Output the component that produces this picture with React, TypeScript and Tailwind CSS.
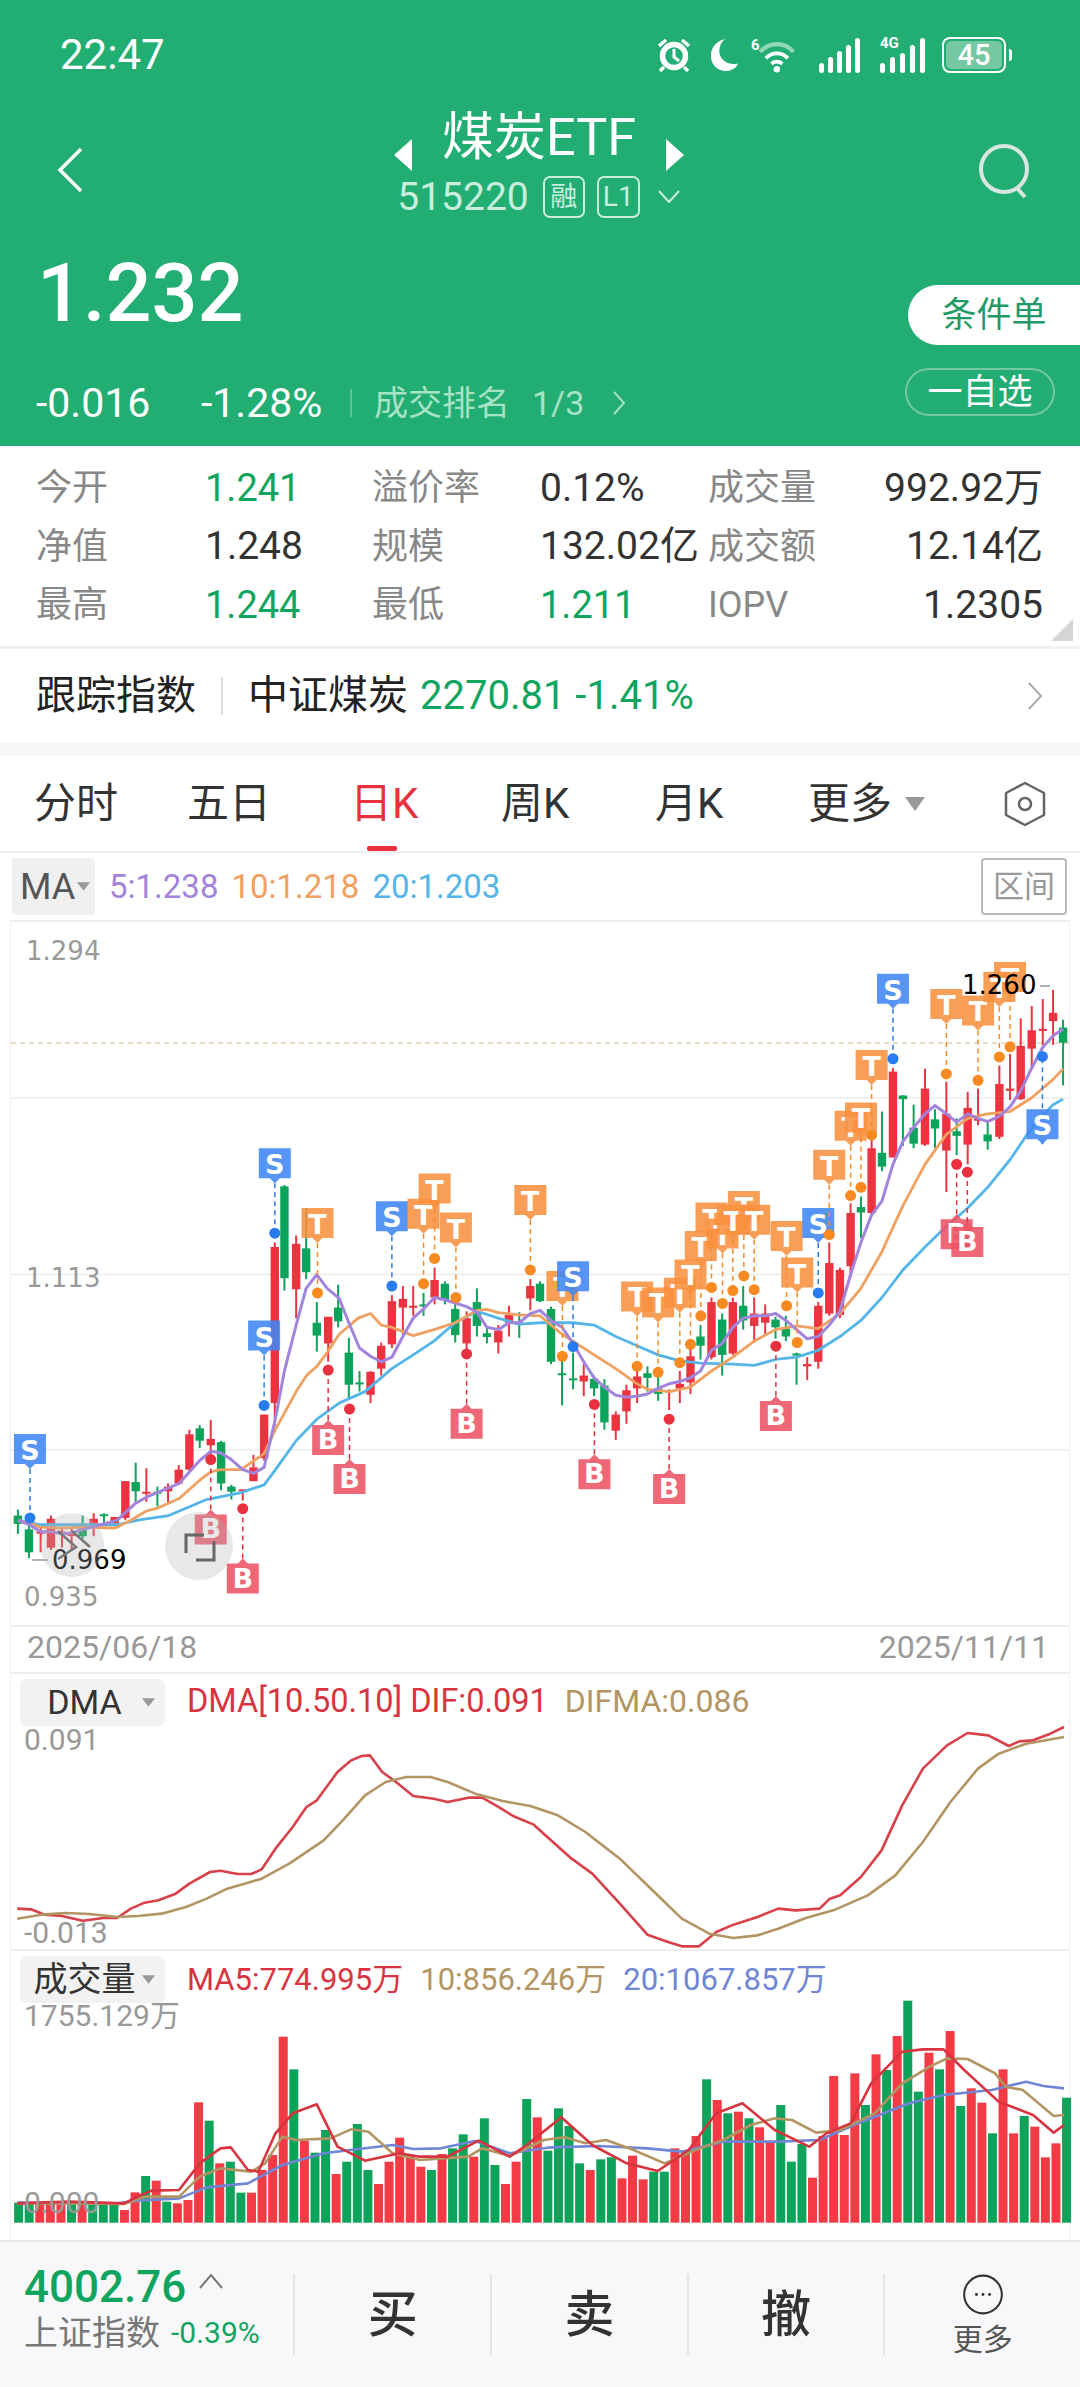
// Coal ETF quote screen — daily K chart with DMA and volume panels
type Candle = [string, number, number, number, number, number]
type Marker = [string, number, number, number]
type Pt = [number, number]

const CJK_NUM = "font-['Roboto','Noto_Sans_CJK_SC',sans-serif]"

// chart data is read off the reference crops, then scaled back to page pixels
const kx = (x: number) => x / 2.904
const ky = (y: number) => 920 + y / 2.178
const rx = (x: number) => 540 + x / 2.904

const LEFT_CANDLES: Candle[] = [
  ['g', 52, 1282, 1335, 1295, 1313], ['g', 84, 1290, 1388, 1325, 1375], ['r', 118, 1320, 1375, 1330, 1332],
  ['r', 148, 1295, 1370, 1302, 1365], ['r', 180, 1320, 1365, 1330, 1332], ['r', 208, 1320, 1370, 1335, 1338],
  ['g', 240, 1295, 1345, 1315, 1340], ['r', 272, 1290, 1340, 1302, 1320], ['g', 302, 1290, 1312, 1292, 1295],
  ['r', 333, 1298, 1315, 1298, 1312], ['r', 364, 1220, 1305, 1220, 1300], ['g', 394, 1180, 1265, 1222, 1242],
  ['r', 425, 1192, 1265, 1243, 1246], ['g', 457, 1232, 1275, 1243, 1246], ['r', 488, 1225, 1268, 1232, 1242],
  ['r', 519, 1185, 1228, 1195, 1225], ['r', 550, 1108, 1198, 1118, 1195], ['g', 580, 1098, 1148, 1105, 1132],
  ['r', 612, 1087, 1175, 1128, 1142], ['g', 642, 1132, 1240, 1135, 1225], ['g', 672, 1228, 1260, 1232, 1243],
  ['r', 705, 1238, 1262, 1238, 1241], ['r', 736, 1163, 1220, 1190, 1220], ['r', 767, 1075, 1175, 1075, 1170],
  ['r', 798, 700, 1100, 710, 1050], ['g', 826, 575, 805, 578, 778], ['r', 860, 685, 865, 703, 802],
  ['g', 889, 625, 780, 713, 765], ['g', 920, 830, 938, 875, 903], ['r', 953, 862, 960, 862, 920],
  ['g', 982, 792, 885, 842, 872], ['g', 1013, 908, 1040, 940, 1010], ['g', 1044, 980, 1025, 1005, 1008],
  ['r', 1076, 980, 1050, 982, 1032], ['r', 1107, 918, 990, 925, 975], ['r', 1138, 815, 930, 828, 922],
  ['r', 1170, 795, 900, 823, 842], ['r', 1200, 795, 860, 838, 841], ['g', 1230, 810, 860, 835, 838],
  ['r', 1262, 755, 835, 782, 820], ['g', 1292, 785, 835, 790, 825], ['g', 1322, 822, 918, 845, 902],
  ['r', 1355, 850, 950, 865, 920], ['g', 1385, 800, 905, 830, 882], ['g', 1414, 885, 920, 898, 906],
  ['r', 1447, 880, 942, 892, 918], ['r', 1478, 838, 905, 858, 875], ['g', 1508, 852, 908, 875, 878],
  ['r', 1540, 780, 848, 795, 822],
]

const RIGHT_CANDLES: Candle[] = [
  ['g', 0, 785, 830, 790, 828], ['g', 32, 840, 965, 845, 960], ['g', 64, 950, 1055, 985, 988],
  ['g', 96, 940, 1020, 996, 998], ['r', 127, 965, 1035, 990, 1003], ['g', 157, 990, 1035, 997, 1018],
  ['g', 187, 998, 1108, 1012, 1092], ['r', 220, 1068, 1130, 1075, 1110], ['r', 251, 1010, 1095, 1022, 1068],
  ['r', 282, 965, 1050, 992, 1018], ['g', 312, 970, 1025, 985, 995], ['g', 343, 985, 1045, 1018, 1030],
  ['r', 375, 1020, 1065, 1022, 1026], ['r', 406, 980, 1050, 1008, 1018], ['r', 437, 920, 1030, 948, 1005],
  ['g', 466, 880, 955, 905, 925], ['r', 498, 820, 955, 830, 950], ['g', 529, 855, 990, 868, 945],
  ['r', 560, 820, 945, 830, 942], ['g', 590, 795, 890, 838, 870], ['r', 622, 820, 918, 855, 882],
  ['r', 654, 835, 900, 855, 875], ['g', 684, 862, 910, 868, 885], ['g', 714, 860, 915, 888, 905],
  ['g', 745, 940, 1010, 942, 945], ['r', 776, 950, 1000, 965, 970], ['r', 808, 830, 975, 838, 960],
  ['r', 840, 700, 860, 745, 855], ['r', 871, 755, 865, 760, 858], ['r', 902, 615, 775, 636, 752],
  ['g', 932, 600, 690, 623, 635], ['r', 963, 470, 640, 495, 636], ['g', 993, 415, 545, 505, 535],
  ['r', 1025, 320, 515, 328, 515], ['g', 1054, 380, 490, 380, 388], ['g', 1085, 400, 495, 450, 485],
  ['r', 1118, 322, 490, 365, 487], ['g', 1147, 410, 495, 432, 452], ['r', 1180, 350, 590, 420, 500],
  ['g', 1210, 430, 510, 458, 468], ['r', 1242, 372, 530, 407, 487], ['r', 1272, 365, 445, 430, 435],
  ['g', 1300, 438, 498, 465, 480], ['r', 1334, 315, 475, 355, 470], ['r', 1365, 290, 390, 365, 370],
  ['r', 1396, 212, 390, 272, 388], ['r', 1428, 185, 320, 238, 278], ['r', 1460, 170, 270, 235, 238],
  ['r', 1490, 150, 270, 200, 218], ['g', 1519, 215, 358, 232, 265],
]

const LEFT_MARKERS: Marker[] = [
  ['S', 87, 1152, 1300], ['S', 798, 530, 680], ['S', 767, 905, 1055], ['T', 922, 660, 810], ['S', 1138, 645, 795],
  ['T', 1230, 640, 790], ['T', 1262, 585, 735], ['T', 1324, 670, 820], ['T', 1540, 610, 760], ['B', 612, 1323, 1173],
  ['B', 705, 1430, 1280], ['B', 953, 1128, 978], ['B', 1015, 1213, 1063], ['B', 1355, 1093, 943],
]

const RIGHT_MARKERS: Marker[] = [
  ['T', 65, 797, 948], ['S', 96, 776, 927], ['T', 282, 820, 970], ['T', 343, 833, 983], ['T', 406, 812, 962],
  ['T', 498, 648, 798], ['T', 467, 710, 860], ['T', 437, 772, 922], ['T', 530, 683, 833], ['T', 592, 623, 773],
  ['T', 560, 653, 805], ['T', 622, 653, 803], ['T', 716, 688, 838], ['T', 747, 768, 918], ['S', 808, 660, 810],
  ['T', 840, 533, 683], ['T', 902, 448, 598], ['T', 932, 430, 580], ['T', 963, 316, 466], ['S', 1025, 150, 300],
  ['T', 1180, 183, 333], ['T', 1272, 197, 347], ['T', 1365, 124, 274], ['T', 1334, 146, 296], ['S', 1459, 445, 295],
  ['B', 158, 1203, 1053], ['B', 375, 1235, 1085], ['B', 685, 1076, 926], ['B', 1210, 680, 530], ['B', 1241, 697, 547],
]

const MA5_L: Pt[] = [[52,1305],[85,1315],[118,1330],[150,1330],[180,1335],[210,1333],[240,1325],[270,1320],[340,1305],[394,1268],[425,1255],[488,1235],[520,1225],[580,1175],[612,1155],[640,1158],[670,1172],[705,1195],[736,1203],[767,1190],[798,1090],[826,980],[860,880],[889,800],[920,770],[950,800],[985,822],[1013,875],[1044,930],[1076,948],[1107,960],[1138,950],[1170,905],[1200,865],[1230,845],[1262,820],[1292,825],[1322,832],[1355,840],[1385,852],[1414,885],[1447,890],[1478,875],[1508,875],[1540,855]]
const MA5_R: Pt[] = [[0,848],[32,870],[64,885],[96,920],[127,960],[157,995],[187,1015],[220,1033],[251,1037],[282,1035],[312,1030],[343,1018],[375,1008],[406,1003],[437,995],[466,980],[498,935],[529,920],[560,885],[590,865],[622,860],[654,860],[684,855],[714,870],[745,890],[776,910],[808,905],[840,880],[871,850],[902,770],[932,700],[963,640],[993,610],[1025,530],[1054,480],[1085,450],[1118,420],[1147,402],[1180,420],[1210,438],[1242,420],[1272,430],[1300,437],[1334,425],[1365,405],[1396,370],[1428,320],[1460,275],[1490,250],[1519,235]]
const MA10_L: Pt[] = [[52,1305],[118,1320],[180,1322],[240,1320],[335,1322],[380,1305],[425,1285],[460,1278],[520,1258],[580,1218],[612,1200],[640,1195],[700,1195],[767,1160],[798,1110],[860,1025],[890,990],[920,970],[950,940],[985,900],[1040,865],[1076,855],[1107,880],[1138,885],[1200,903],[1260,890],[1322,875],[1385,848],[1414,846],[1447,853],[1508,858]]
const MA10_R: Pt[] = [[0,860],[32,880],[64,900],[96,915],[157,945],[220,975],[282,1008],[312,1020],[375,1025],[437,1015],[498,980],[560,950],[622,915],[684,890],[745,882],[808,888],[871,855],[932,800],[993,720],[1054,620],[1118,530],[1180,465],[1242,430],[1300,420],[1365,415],[1428,385],[1490,345],[1519,322]]
const MA20_L: Pt[] = [[52,1305],[118,1315],[210,1315],[340,1315],[400,1305],[490,1295],[600,1260],[700,1245],[767,1228],[800,1195],[860,1132],[920,1085],[985,1050],[1060,1025],[1138,975],[1200,945],[1260,915],[1322,875],[1385,850],[1447,865],[1508,878]]
const MA20_R: Pt[] = [[0,875],[96,875],[157,880],[220,905],[282,925],[343,945],[406,958],[466,963],[560,965],[622,968],[684,955],[745,950],[808,935],[871,905],[932,870],[993,820],[1054,760],[1118,710],[1180,665],[1242,625],[1300,580],[1365,520],[1428,450],[1490,400],[1519,388]]

const DIF: Pt[] = [[25,830],[45,832],[65,848],[90,852],[120,866],[150,858],[170,858],[190,830],[210,812],[230,805],[255,785],[275,755],[305,720],[320,716],[345,726],[365,726],[380,712],[400,650],[425,585],[445,525],[460,505],[490,420],[510,385],[525,372],[537,370],[555,420],[575,450],[600,492],[630,500],[650,510],[680,497],[700,497],[720,520],[745,552],[775,578],[800,625],[830,680],[860,725],[900,815],[940,908],[970,930],[990,943],[1015,943],[1040,900],[1065,878],[1100,855],[1130,830],[1155,835],[1190,830],[1205,800],[1220,790],[1250,735],[1280,655],[1310,520],[1340,410],[1375,340],[1405,303],[1435,310],[1465,342],[1480,328],[1500,325],[1525,305],[1545,285]]
const DIFMA: Pt[] = [[25,860],[60,848],[95,843],[130,846],[170,855],[200,852],[235,845],[270,825],[300,800],[330,770],[380,740],[420,695],[470,625],[500,560],[530,490],[560,450],[590,435],[625,435],[650,450],[690,485],[730,507],[770,522],[810,550],[850,600],[900,680],[950,780],[990,860],[1030,905],[1065,918],[1100,910],[1130,890],[1170,858],[1210,835],[1260,790],[1300,730],[1340,630],[1380,510],[1420,410],[1450,365],[1490,335],[1545,315]]

const VOL_BARS: [string, number][] = ([
  'g758','g760','r760','r760','r760','g760','r760','g760','g760','g760','r780','r727','g678','r692','g755','r760','r750','r457','g512','r640',
  'g635','g728','r728','r660','r615','r260','g358','r572','g608','g540','r672','g635','g522','g660','r702','r635','r563','r615','r650','g660',
  'r612','g595','g553','r620','g505','g645','r702','r635','g447','r502','g602','g475','g528','g640','r660','g628','g622','r685','r617','r688',
  'g665','g665','r595','r600','r558','g388','r450','g490','r485','g505','r532','r575','g465','g635','g582','r683','r558','r378','r555','r370',
  'g465','r313','g360','r258','g152','g425','r308','g358','r243','g468','r415','r458','g550','r358','r550','g498','r530','r622','r580','g443',
] as string[]).map((s) => [s[0], Number(s.slice(1))])
const VOL_MA5: Pt[] = [[25,760],[100,755],[180,760],[205,735],[220,722],[260,720],[290,640],[320,595],[335,592],[360,660],[375,665],[400,550],[425,490],[460,463],[490,590],[530,632],[580,610],[610,620],[650,620],[695,572],[740,620],[765,585],[815,502],[860,585],[910,640],[955,663],[1000,600],[1040,490],[1078,460],[1125,540],[1175,590],[1200,550],[1235,520],[1265,400],[1310,305],[1340,298],[1370,298],[1400,360],[1450,455],[1500,495],[1530,548],[1545,525]]
const VOL_MA10: Pt[] = [[25,760],[100,760],[180,762],[210,740],[260,740],[290,680],[320,655],[365,665],[385,640],[410,560],[430,570],[480,565],[510,538],[535,545],[570,610],[610,630],[680,620],[700,595],[740,618],[790,570],[820,562],[850,580],[880,570],[920,600],[965,640],[1010,600],[1050,570],[1090,525],[1125,505],[1150,510],[1185,548],[1220,540],[1270,490],[1310,400],[1350,350],[1375,325],[1405,327],[1445,370],[1460,410],[1485,420],[1530,498],[1545,495]]
const VOL_MA20: Pt[] = [[25,758],[170,760],[200,752],[260,745],[300,712],[360,700],[410,645],[470,610],[530,595],[570,585],[600,597],[640,595],[690,573],[740,610],[800,592],[870,588],[940,595],[990,605],[1050,575],[1130,575],[1190,570],[1240,525],[1320,460],[1370,435],[1440,420],[1490,395],[1515,408],[1545,415]]

const toK = (l: Pt[], r: Pt[]) =>
  [...l.map(([x, y]) => `${kx(x)},${ky(y)}`), ...r.map(([x, y]) => `${rx(x)},${ky(y)}`)].join(' ')
const toDma = (p: Pt[]) => p.map(([x, y]) => `${x / 1.452},${1630 + y / 3}`).join(' ')
const toVol = (p: Pt[]) => p.map(([x, y]) => `${x / 1.452},${1950 + y / 3}`).join(' ')

const MARKER_STYLE: Record<string, { tag: string; dot: string }> = {
  T: { tag: '#f8913f', dot: '#f78a20' },
  S: { tag: '#3f86f4', dot: '#2a7bf0' },
  B: { tag: '#ec5364', dot: '#e8303f' },
}

function CandleMark({ c, mapX }: { c: Candle; mapX: (x: number) => number }) {
  const [color, x, hi, lo, top, bot] = c
  const fill = color === 'r' ? '#ee3340' : '#0ea35a'
  const cx = mapX(x)
  return (
    <g fill={fill}>
      <rect x={cx - 1} y={ky(hi)} width={2} height={ky(lo) - ky(hi)} />
      <rect x={cx - 4.2} y={ky(top)} width={8.4} height={Math.max(2, ky(bot) - ky(top))} />
    </g>
  )
}

function TradeMark({ m, mapX }: { m: Marker; mapX: (x: number) => number }) {
  const [type, x, tagY, dotY] = m
  const style = MARKER_STYLE[type]
  const cx = mapX(x)
  const cy = ky(tagY)
  const dy = ky(dotY)
  const up = type === 'B'
  const path = up
    ? `M${cx - 16} ${cy - 14}H${cx - 5}L${cx} ${cy - 19}L${cx + 5} ${cy - 14}H${cx + 16}V${cy + 16}H${cx - 16}Z`
    : `M${cx - 16} ${cy - 16}H${cx + 16}V${cy + 14}H${cx + 5}L${cx} ${cy + 19}L${cx - 5} ${cy + 14}H${cx - 16}Z`
  return (
    <g>
      <line x1={cx} y1={up ? cy - 19 : cy + 19} x2={cx} y2={dy} stroke={style.dot} strokeWidth={1.5} strokeDasharray="5 4" />
      <ellipse cx={cx} cy={dy} rx={5.5} ry={5.5} fill={style.dot} />
      <path d={path} fill={style.tag} fillOpacity={0.88} />
      <text x={cx} y={cy + 10} textAnchor="middle" fill="#fff" fontSize={27} fontWeight={700} className="font-['DejaVu_Sans',sans-serif]">
        {type}
      </text>
    </g>
  )
}

function KChart() {
  return (
    <svg viewBox="11 921 1058 703" className="block w-[1058px] h-[703px]">
      {[1097, 1273.5, 1449].map((y) => (
        <line key={y} x1={11} x2={1069} y1={y} y2={y} stroke="#ececec" strokeWidth={1.5} />
      ))}
      <line x1={11} x2={1069} y1={1042} y2={1042} stroke="#d9b88a" strokeWidth={1.2} strokeDasharray="5 4" />
      <g fill="#999" fontSize={26} className="font-['DejaVu_Sans',sans-serif]">
        <text x={26} y={959}>1.294</text>
        <text x={26} y={1286}>1.113</text>
        <text x={24} y={1605}>0.935</text>
      </g>
      {LEFT_CANDLES.map((c) => <CandleMark key={c[1]} c={c} mapX={kx} />)}
      {RIGHT_CANDLES.map((c) => <CandleMark key={c[1]} c={c} mapX={rx} />)}
      <polyline points={toK(MA20_L, MA20_R)} fill="none" stroke="#53b5e8" strokeWidth={2.8} strokeLinejoin="round" />
      <polyline points={toK(MA10_L, MA10_R)} fill="none" stroke="#f0a060" strokeWidth={2.8} strokeLinejoin="round" />
      <polyline points={toK(MA5_L, MA5_R)} fill="none" stroke="#a284dc" strokeWidth={3} strokeLinejoin="round" />
      {LEFT_MARKERS.map((m) => <TradeMark key={`${m[0]}${m[1]}`} m={m} mapX={kx} />)}
      {RIGHT_MARKERS.map((m) => <TradeMark key={`${m[0]}${m[1]}`} m={m} mapX={rx} />)}
      <text x={962} y={993} fill="#000" fontSize={26} className="font-['DejaVu_Sans',sans-serif]">1.260</text>
      <line x1={1040} x2={1050} y1={985} y2={985} stroke="#999" strokeWidth={1.5} />
      <line x1={32} x2={48} y1={1559} y2={1559} stroke="#999" strokeWidth={1.5} />
      <text x={52} y={1568} fill="#000" fontSize={26} className="font-['DejaVu_Sans',sans-serif]">0.969</text>
      {/* floating screenshot helpers */}
      <circle cx={72} cy={1544} r={32} fill="#b4b4b4" fillOpacity={0.3} />
      <path d="M58 1530L76 1546L58 1558M72 1530L90 1546" fill="none" stroke="#777" strokeWidth={2.5} />
      <circle cx={199} cy={1545} r={34} fill="#b4b4b4" fillOpacity={0.3} />
      <path d="M186 1552V1534H204M214 1540V1559H196" fill="none" stroke="#666" strokeWidth={3} />
    </svg>
  )
}

function DmaChart() {
  return (
    <svg viewBox="11 1730 1058 217" className="block w-[1058px] h-[217px] overflow-visible">
      <g fill="#999" fontSize={30}>
        <text x={24} y={1748}>0.091</text>
        <text x={24} y={1941}>-0.013</text>
      </g>
      <polyline points={toDma(DIF)} fill="none" stroke="#d8404a" strokeWidth={2.6} strokeLinejoin="round" />
      <polyline points={toDma(DIFMA)} fill="none" stroke="#b39563" strokeWidth={2.6} strokeLinejoin="round" />
    </svg>
  )
}

function VolumeChart() {
  return (
    <svg viewBox="11 2003 1058 237" className="block w-[1058px] h-[237px] overflow-visible">
      {VOL_BARS.map(([color, top], i) => {
        const x = (27 + 15.37 * i) / 1.452
        const y = 1950 + top / 3
        return <rect key={i} x={x - 4.5} y={y} width={9} height={2222.7 - y} fill={color === 'r' ? '#f23b45' : '#0ea35a'} />
      })}
      <polyline points={toVol(VOL_MA20)} fill="none" stroke="#6f86d6" strokeWidth={2.6} strokeLinejoin="round" />
      <polyline points={toVol(VOL_MA10)} fill="none" stroke="#b39563" strokeWidth={2.6} strokeLinejoin="round" />
      <polyline points={toVol(VOL_MA5)} fill="none" stroke="#d8343f" strokeWidth={2.6} strokeLinejoin="round" />
      <g fill="#999" fontSize={30}>
        <text x={24} y={2026}>1755.129万</text>
        <text x={24} y={2213}>0.000</text>
      </g>
    </svg>
  )
}

function StatusIcons() {
  return (
    <div className="flex items-center text-white">
      <svg viewBox="0 0 36 36" className="w-[36px] h-[36px] mr-[17px]" fill="none" stroke="#fff">
        <circle cx="18" cy="19" r="11.5" strokeWidth="5.5" />
        <path d="M18 12v8l5 4" strokeWidth="3" />
        <path d="M3 9l7-6M33 9l-7-6M8 30l-4 4M28 30l4 4" strokeWidth="3.5" />
      </svg>
      <svg viewBox="0 0 32 36" className="w-[30px] h-[36px] mr-[12px]" fill="#fff">
        <path d="M17 1C8 3 2 10 2 19c0 9 7 16 16 16 6 0 11-3 13-8-10 3-20-4-20-13 0-5 2-10 6-13z" />
      </svg>
      <svg viewBox="0 0 52 40" className="w-[48px] h-[37px] mr-[20px]" fill="none" stroke="#fff">
        <text x="0" y="14" fill="#fff" stroke="none" fontSize="16" fontWeight="700">6</text>
        <path d="M10 16C20 5 36 5 46 16" strokeWidth="4.5" opacity="0.5" />
        <path d="M16 23c7-7 17-7 24 0" strokeWidth="4" />
        <path d="M22 29c4-3 8-3 12 0" strokeWidth="4" />
        <circle cx="28" cy="35" r="3.5" fill="#fff" stroke="none" />
      </svg>
      <div className="flex items-end gap-[4px] h-[35px] mr-[20px]">
        <span className="w-[5px] h-[10px] bg-white rounded-full" />
        <span className="w-[5px] h-[16px] bg-white rounded-full" />
        <span className="w-[5px] h-[22px] bg-white rounded-full" />
        <span className="w-[5px] h-[28px] bg-white rounded-full" />
        <span className="w-[5px] h-[35px] bg-white rounded-full" />
      </div>
      <div className="relative flex items-end gap-[5px] h-[35px] mr-[17px]">
        <span className="absolute left-0 -top-[2px] text-[15px] leading-none font-bold">4G</span>
        <span className="w-[5px] h-[10px] bg-white rounded-full" />
        <span className="w-[5px] h-[16px] bg-white rounded-full" />
        <span className="w-[5px] h-[20px] bg-white rounded-full" />
        <span className="w-[5px] h-[28px] bg-white rounded-full" />
        <span className="w-[5px] h-[35px] bg-white rounded-full" />
      </div>
      <div className="w-[64px] h-[36px] rounded-[8px] border-2 border-white flex items-center p-[2px]">
        <div className="w-full h-full rounded-[5px] bg-[#74c9a2] flex items-center justify-center text-[29px] font-medium leading-none">
          45
        </div>
      </div>
      <span className="w-[3px] h-[12px] ml-[3px] bg-white rounded-r" />
    </div>
  )
}

function Header() {
  return (
    <div className="h-[446px] bg-[#22ad72] text-white shrink-0">
      <div className="h-[110px] flex items-center justify-between pl-[60px] pr-[68px]">
        <span className="text-[42px] leading-none">22:47</span>
        <StatusIcons />
      </div>
      <div className="h-[122px] flex justify-between pl-[56px] pr-[48px]">
        <svg viewBox="0 0 28 46" className="w-[28px] h-[46px] mt-[37px]" fill="none" stroke="#fff" strokeWidth="3.5">
          <path d="M25 2L4 23l21 21" />
        </svg>
        <div className="flex flex-col items-center ml-[16px]">
          <div className="flex items-center gap-[30px] h-[56px]">
            <svg viewBox="0 0 18 32" className="w-[18px] h-[32px] mt-[34px]" fill="#fff"><path d="M18 0L0 16l18 16z" /></svg>
            <span className="text-[52px] leading-none">煤炭ETF</span>
            <svg viewBox="0 0 18 32" className="w-[18px] h-[32px] mt-[34px]" fill="#fff"><path d="M0 0l18 16L0 32z" /></svg>
          </div>
          <div className="flex items-center mt-[9px] h-[44px] text-[#c9eedd]">
            <span className="text-[39px] leading-none">515220</span>
            <span className="ml-[14px] w-[42px] h-[42px] rounded-[7px] border-2 border-[#c9eedd] flex items-center justify-center text-[27px] leading-none">融</span>
            <span className="ml-[12px] w-[43px] h-[42px] rounded-[7px] border-2 border-[#c9eedd] flex items-center justify-center text-[28px] leading-none">L1</span>
            <svg viewBox="0 0 24 14" className="w-[24px] h-[14px] ml-[17px]" fill="none" stroke="#c9eedd" strokeWidth="2"><path d="M2 1l10 11L22 1" /></svg>
          </div>
        </div>
        <svg viewBox="0 0 54 56" className="w-[54px] h-[56px] mt-[33px]" fill="none" stroke="#d8e6df" strokeWidth="4">
          <circle cx="26" cy="26" r="23" />
          <path d="M38 44l9 10" />
        </svg>
      </div>
      <div className="flex justify-between">
        <div className="flex flex-col">
          <span className="pl-[37px] mt-[18px] text-[81px] leading-[88px] font-medium">1.232</span>
          <div className="flex items-center mt-[49px] pl-[36px] h-[32px]">
            <span className="w-[165px] text-[41px] leading-none">-0.016</span>
            <span className="w-[149px] text-[41px] leading-none">-1.28%</span>
            <span className="w-[2px] h-[28px] bg-[#5cc396]" />
            <span className="ml-[22px] text-[34px] leading-none text-[#a6e2c6]">成交排名</span>
            <span className="ml-[22px] text-[34px] leading-none text-[#a6e2c6]">1/3</span>
            <svg viewBox="0 0 14 26" className="w-[14px] h-[26px] ml-[28px]" fill="none" stroke="#a6e2c6" strokeWidth="2"><path d="M2 2l10 11L2 24" /></svg>
          </div>
        </div>
        <div className="flex flex-col items-end mt-[53px]">
          <div className="w-[172px] h-[60px] bg-white rounded-l-[30px] flex items-center justify-center text-[35px] leading-none text-[#229a68]">条件单</div>
          <div className="mt-[23px] mr-[25px] w-[150px] h-[48px] rounded-[24px] border-2 border-[#74c9a2] flex items-center justify-center text-[35px] leading-none">一自选</div>
        </div>
      </div>
    </div>
  )
}

function QuoteGrid() {
  const label = 'text-[36px] leading-none text-[#888]'
  const value = 'text-[39px] leading-none text-[#333]'
  const green = 'text-[38px] leading-none text-[#10a55f]'
  return (
    <div className="relative h-[203px] shrink-0 pl-[36px] pt-[13px] border-b-[3px] border-[#f0f0f0]">
      <div className="grid grid-cols-[169px_167px_168px_168px_150px_185px] auto-rows-[58.5px] items-center">
        <span className={label}>今开</span>
        <span className={green}>1.241</span>
        <span className={label}>溢价率</span>
        <span className={value}>0.12%</span>
        <span className={label}>成交量</span>
        <span className={`${value} text-right`}>992.92万</span>
        <span className={label}>净值</span>
        <span className={value}>1.248</span>
        <span className={label}>规模</span>
        <span className={value}>132.02亿</span>
        <span className={label}>成交额</span>
        <span className={`${value} text-right`}>12.14亿</span>
        <span className={label}>最高</span>
        <span className={green}>1.244</span>
        <span className={label}>最低</span>
        <span className={green}>1.211</span>
        <span className={label}>IOPV</span>
        <span className={`${value} text-right`}>1.2305</span>
      </div>
      <svg viewBox="0 0 22 22" className="absolute right-[7px] bottom-[5px] w-[22px] h-[22px]" fill="#d5d5d5"><path d="M22 0v22H0z" /></svg>
    </div>
  )
}

function TrackRow() {
  return (
    <div className="h-[107px] shrink-0 flex items-center pl-[36px] pr-[37px] border-b-[13px] border-[#f7f7f7]">
      <span className="text-[40px] leading-none text-[#222]">跟踪指数</span>
      <span className="w-[2px] h-[38px] bg-[#ddd] ml-[25px] mr-[25px]" />
      <span className="text-[40px] leading-none text-[#222]">中证煤炭</span>
      <span className="ml-[12px] text-[40px] leading-none text-[#10a55f]">2270.81 -1.41%</span>
      <svg viewBox="0 0 16 30" className="w-[16px] h-[30px] ml-auto" fill="none" stroke="#aaa" strokeWidth="2"><path d="M2 2l12 13L2 28" /></svg>
    </div>
  )
}

function Tabs() {
  return (
    <div className="relative h-[97px] shrink-0 flex items-center pl-[34px] pr-[34px] text-[42px] leading-none text-[#333] border-b-2 border-[#eee]">
      <span className="w-[153px]">分时</span>
      <span className="w-[163px]">五日</span>
      <span className="relative w-[151px] h-full flex items-center text-[#e8303f]">
        日K
        <span className="absolute left-[17px] bottom-0 w-[30px] h-[5px] rounded-[2px] bg-[#e8303f]" />
      </span>
      <span className="w-[154px]">周K</span>
      <span className="w-[153px]">月K</span>
      <span>更多</span>
      <svg viewBox="0 0 20 14" className="w-[20px] h-[14px] ml-[13px]" fill="#999"><path d="M0 0h20L10 14z" /></svg>
      <svg viewBox="0 0 42 46" className="w-[42px] h-[46px] ml-auto" fill="none" stroke="#666" strokeWidth="2.5">
        <path d="M21 2L40 12V34L21 44L2 34V12Z" strokeLinejoin="round" />
        <circle cx="21" cy="23" r="6" />
      </svg>
    </div>
  )
}

function MaRow() {
  return (
    <div className="h-[67px] shrink-0 flex items-center pl-[12px] pr-[13px]">
      <div className="w-[83px] h-[57px] bg-[#f0f0f0] rounded-[4px] flex items-center pl-[8px]">
        <span className="text-[36px] leading-none text-[#555]">MA</span>
        <svg viewBox="0 0 12 8" className="w-[13px] h-[9px] ml-[2px]" fill="#999"><path d="M0 0h12L6 8z" /></svg>
      </div>
      <span className="ml-[14px] text-[33px] leading-none text-[#a284dc]">5:1.238</span>
      <span className="ml-[13px] text-[33px] leading-none text-[#f0a060]">10:1.218</span>
      <span className="ml-[13px] text-[33px] leading-none text-[#53b5e8]">20:1.203</span>
      <span className="ml-auto w-[86px] h-[57px] rounded-[4px] border-2 border-[#bbb] flex items-center justify-center text-[31px] leading-none text-[#999]">区间</span>
    </div>
  )
}

function PanelHeader({ name, children }: { name: string; children: React.ReactNode }) {
  return (
    <div className="flex items-center pl-[9px] h-[48px]">
      <div className="w-[145px] h-[47px] bg-[#f2f2f2] rounded-[6px] flex items-center justify-between pl-[7px] pr-[10px]">
        <span className="flex-1 text-center text-[34px] leading-none text-[#333]">{name}</span>
        <svg viewBox="0 0 12 8" className="w-[13px] h-[9px]" fill="#999"><path d="M0 0h12L6 8z" /></svg>
      </div>
      <div className="ml-[22px] flex items-center leading-none">{children}</div>
    </div>
  )
}

function ChartArea() {
  return (
    <div className="mx-[10px] w-[1060px] border-x border-t-2 border-[#eee] shrink-0">
      <KChart />
      <div className="h-[47px] flex items-center justify-between pl-[16px] pr-[20px] pb-[5px] border-t-2 border-[#eee] text-[32px] leading-none text-[#999]">
        <span>2025/06/18</span>
        <span>2025/11/11</span>
      </div>
      <div className="border-t-2 border-[#eee] pt-[4px]">
        <PanelHeader name="DMA">
          <span className="text-[32.5px] -mt-[2px] text-[#d8343f]">DMA[10.50.10] DIF:0.091</span>
          <span className="ml-[17px] text-[32px] -mt-[2px] text-[#b39563]">DIFMA:0.086</span>
        </PanelHeader>
        <div className="h-[6px]" />
        <DmaChart />
      </div>
      <div className="border-t-2 border-[#eee] pt-[4px]">
        <PanelHeader name="成交量">
          <span className="text-[31px] text-[#d8343f]">MA5:774.995万</span>
          <span className="ml-[17px] text-[31px] text-[#b39563]">10:856.246万</span>
          <span className="ml-[17px] text-[31px] text-[#6f86d6]">20:1067.857万</span>
        </PanelHeader>
        <VolumeChart />
      </div>
    </div>
  )
}

function Footer() {
  const cell = 'w-[197px] h-[81px] border-l-2 border-[#e5e5e5] flex items-center justify-center'
  return (
    <div className="flex-1 bg-[#f8f8fa] border-t-2 border-[#e8e8e8] flex items-center">
      <div className="w-[294px] pl-[24px] -mt-[14px]">
        <div className="flex items-center">
          <span className="text-[44px] leading-none font-medium text-[#10a55f]">4002.76</span>
          <svg viewBox="0 0 26 16" className="w-[26px] h-[16px] ml-[12px] -mt-[12px]" fill="none" stroke="#777" strokeWidth="2"><path d="M2 15L13 2l11 13" /></svg>
        </div>
        <div className="flex items-center mt-[7px]">
          <span className="text-[34px] leading-none text-[#777]">上证指数</span>
          <span className="ml-[11px] text-[30px] leading-none text-[#10a55f]">-0.39%</span>
        </div>
      </div>
      <div className={`${cell} text-[50px] leading-none font-medium text-[#333]`}>买</div>
      <div className={`${cell} text-[50px] leading-none font-medium text-[#333]`}>卖</div>
      <div className={`${cell} text-[50px] leading-none font-medium text-[#333]`}>撤</div>
      <div className={`${cell} flex-col gap-[10px]`}>
        <svg viewBox="0 0 50 50" className="w-[48px] h-[48px]" fill="none" stroke="#333" strokeWidth="2.5">
          <circle cx="25" cy="25" r="23" />
          <circle cx="17" cy="25" r="1.8" fill="#333" stroke="none" />
          <circle cx="25" cy="25" r="1.8" fill="#333" stroke="none" />
          <circle cx="33" cy="25" r="1.8" fill="#333" stroke="none" />
        </svg>
        <span className="text-[30px] leading-none text-[#555]">更多</span>
      </div>
    </div>
  )
}

export default function App() {
  return (
    <div className={`w-[1080px] h-[2387px] bg-white overflow-hidden flex flex-col ${CJK_NUM}`}>
      <Header />
      <QuoteGrid />
      <TrackRow />
      <Tabs />
      <MaRow />
      <ChartArea />
      <Footer />
    </div>
  )
}
